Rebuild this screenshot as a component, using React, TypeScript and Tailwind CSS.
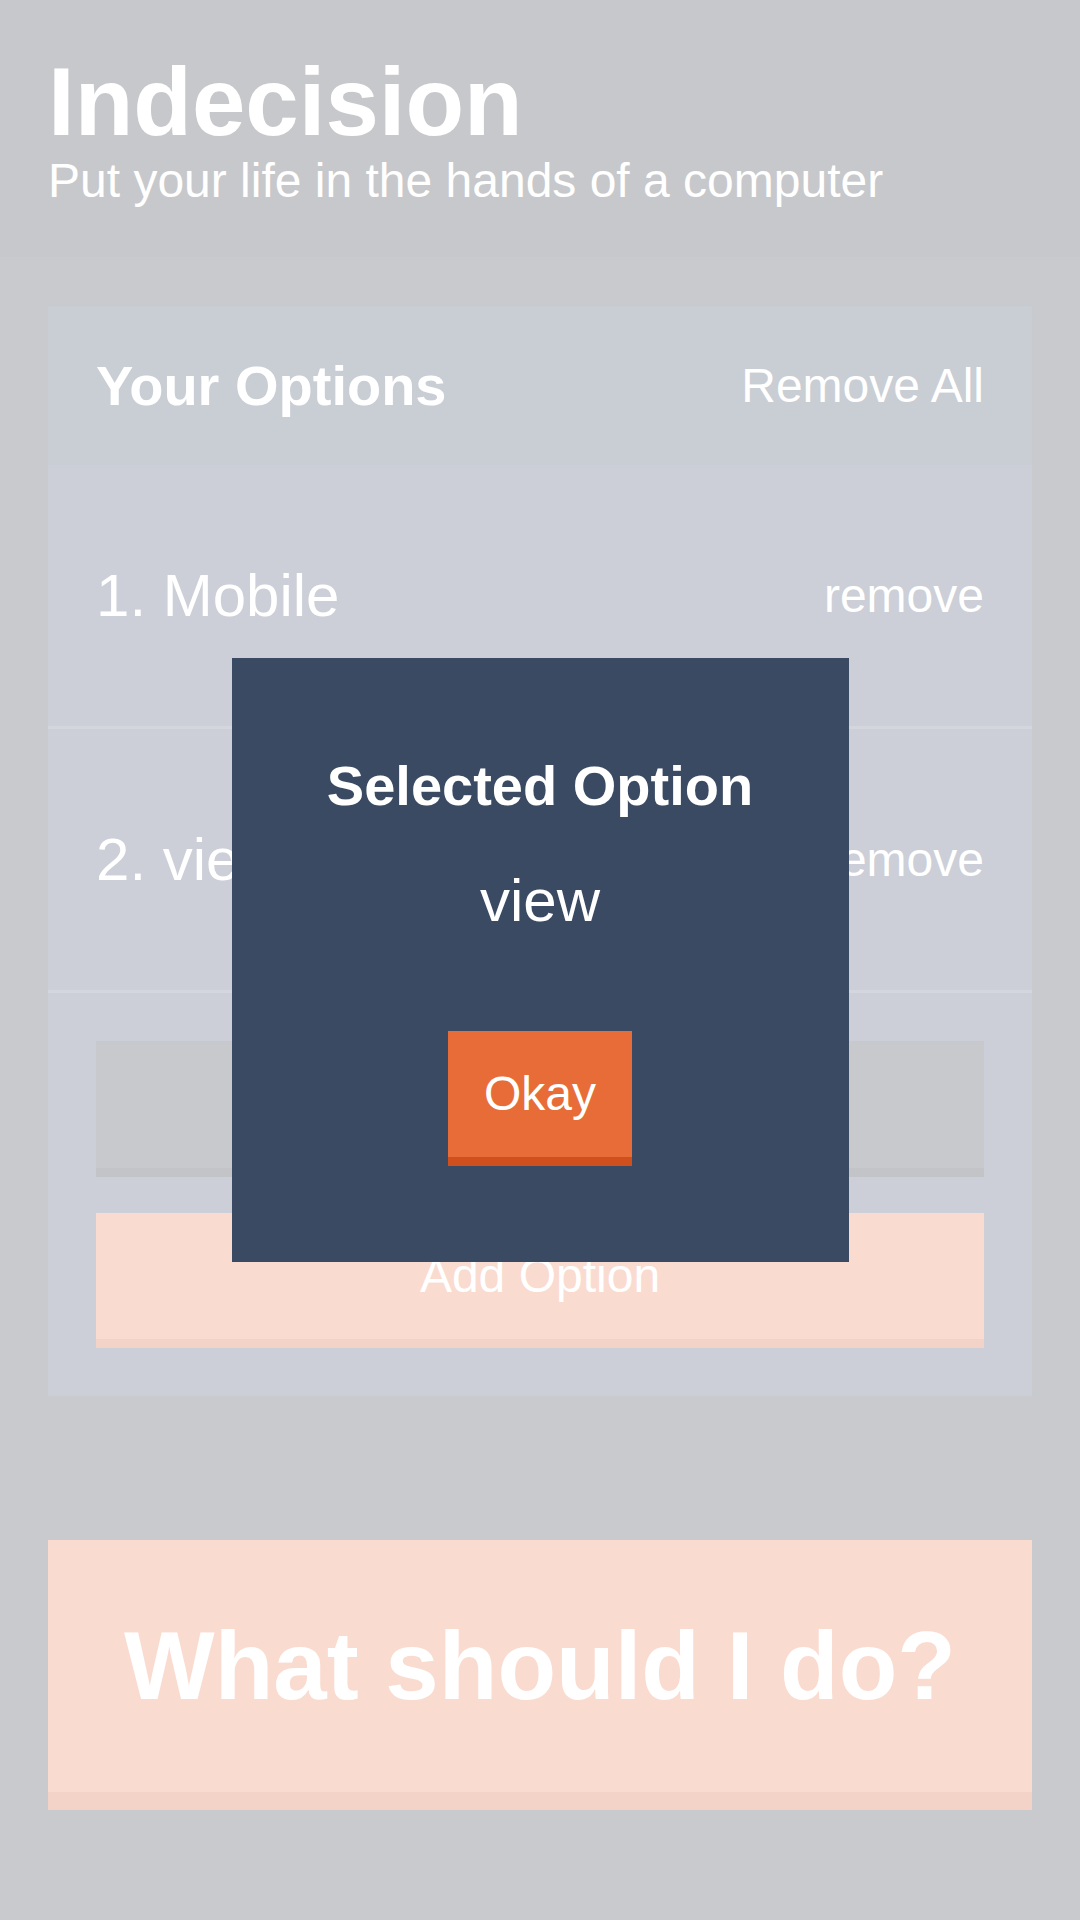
import React from "react";

const options = ["Mobile", "view"];

const App = () => {
  return (
    <div className="relative min-h-[1920px] bg-[#c9cacd] font-['Liberation_Sans',Arial,sans-serif] text-white">
      <header className="bg-[#c7c8cb] pt-[50px] pb-[49px] mb-[49px]">
        <div className="w-[984px] mx-auto">
          <h1 className="text-[96px] font-bold leading-[103px] m-0">Indecision</h1>
          <h2 className="text-[48px] font-normal leading-[55px] m-0">
            Put your life in the hands of a computer
          </h2>
        </div>
      </header>

      <div className="w-[984px] mx-auto">
        {/* Options widget */}
        <div className="bg-[#cccfd7] mb-[144px]">
          <div className="bg-[#c9cdd4] flex justify-between items-center px-[48px] py-[48px]">
            <h3 className="text-[56px] font-bold leading-[63px] m-0">Your Options</h3>
            <button className="text-[48px] leading-[55px]">Remove All</button>
          </div>

          {options.map((option, idx) => (
            <div
              key={option}
              className="flex justify-between items-center px-[48px] py-[96px] border-b-[3px] border-[#d3d6dd]"
            >
              <p className="text-[60px] leading-[69px] m-0">
                {idx + 1}. {option}
              </p>
              <button className="text-[48px] leading-[55px]">remove</button>
            </div>
          ))}

          <form className="flex flex-col p-[48px]" onSubmit={(e) => e.preventDefault()}>
            <input
              type="text"
              name="option"
              className="bg-[#c8c9cd] border-b-[9px] border-[#c3c4c7] p-[36px] text-[48px] leading-[55px] h-[136px] mb-[36px] outline-none"
            />
            <button className="bg-[#fadbd0] border-b-[9px] border-[#f3d3c7] p-[36px] text-[48px] leading-[54px]">
              Add Option
            </button>
          </form>
        </div>

        <button className="w-full bg-[#fadbd0] border-b-[18px] border-[#f3d3c7] py-[72px] text-[96px] font-bold leading-[108px]">
          What should I do?
        </button>
      </div>

      {/* Selected option modal */}
      <div className="absolute inset-0 flex items-center justify-center">
        <div className="w-[617px] bg-[#3a4a63] py-[96px] px-[48px] text-center">
          <h3 className="text-[56px] font-bold leading-[64px] mb-[48px] whitespace-nowrap">Selected Option</h3>
          <p className="text-[60px] font-light leading-[69px] mb-[96px]">view</p>
          <button className="bg-[#e86c37] border-b-[9px] border-[#cf4f1d] px-[36px] py-[36px] text-[48px] leading-[54px]">
            Okay
          </button>
        </div>
      </div>
    </div>
  );
};

export default App;
